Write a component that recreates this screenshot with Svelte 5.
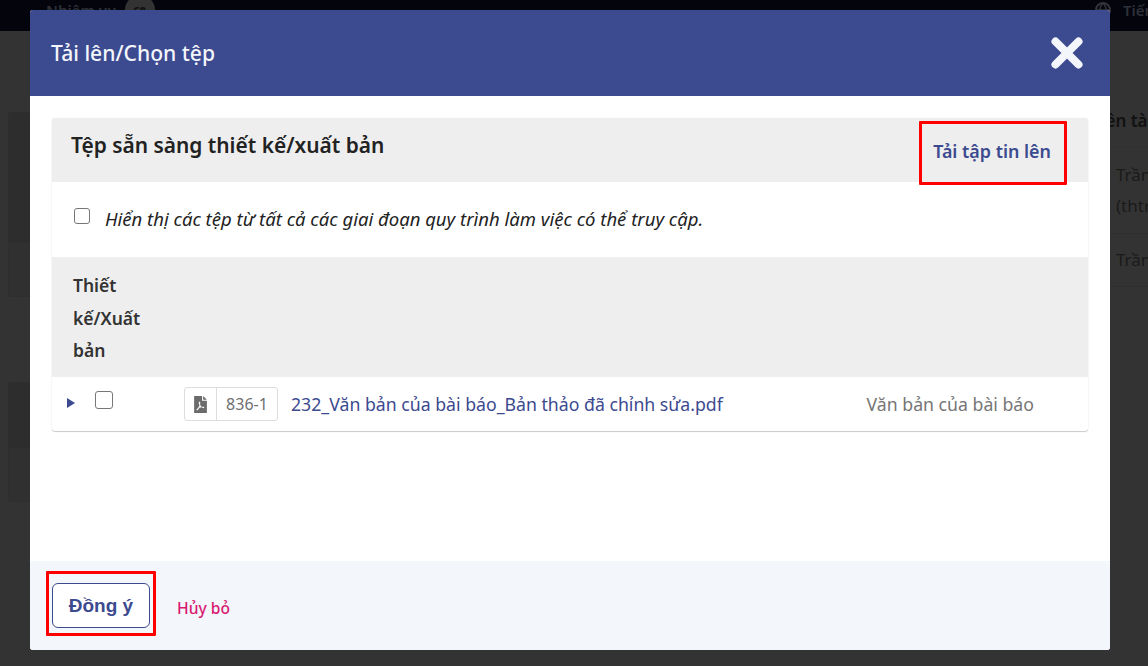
<script>
  const kindLabel = 'Văn bản của bài báo'
  const fileName = '232_Văn bản của bài báo_Bản thảo đã chỉnh sửa.pdf'
</script>

<div class="page">
  <header class="topbar">
    <span class="tasks">Nhiệm vụ <b class="count">68</b></span>
    <span class="lang">
      <svg viewBox="0 0 16 16" width="16" height="16">
        <circle cx="8" cy="8" r="7" fill="none" stroke="#33343a" stroke-width="2" />
        <path d="M1 8h14M8 1c-4 4-4 10 0 14M8 1c4 4 4 10 0 14" fill="none" stroke="#33343a" stroke-width="1.500" />
      </svg>
      <span class="lang-text">Tiến trình</span>
    </span>
  </header>
  <div class="behind">
    <div class="left">
      <div class="bg-card one"><div class="card-top top-one"></div></div>
      <div class="bg-card two"><div class="card-top top-two"></div></div>
    </div>
    <div class="right">
      <div class="right-head">Tên tài khoản</div>
      <div class="right-row first">Trần Hữu<br />(thtrung)</div>
      <div class="right-row second">Trần Hữu</div>
    </div>
  </div>
</div>

<div class="modal">
  <div class="modal-head">
    <h2>Tải lên/Chọn tệp</h2>
    <svg class="close" viewBox="0 0 32 32" width="32" height="32" aria-label="Đóng">
      <path d="M4.500 4.500 L27.500 27.500 M27.500 4.500 L4.500 27.500" stroke="#f3f6fb" stroke-width="8" stroke-linecap="round" />
    </svg>
  </div>

  <div class="modal-body">
    <div class="panel">
      <div class="panel-head">
        <span class="panel-title">Tệp sẵn sàng thiết kế/xuất bản</span>
        <a class="upload">Tải tập tin lên</a>
      </div>
      <label class="filter">
        <span class="check"></span>
        <em>Hiển thị các tệp từ tất cả các giai đoạn quy trình làm việc có thể truy cập.</em>
      </label>
      <div class="col-head">Thiết<br />kế/Xuất<br />bản</div>
      <div class="row">
        <span class="caret"></span>
        <span class="check row-check"></span>
        <span class="badge">
          <span class="badge-icon">
            <svg viewBox="0 0 12 16" width="13" height="17">
              <path fill="#6b6b6b" fill-rule="evenodd" d="M0 0h7.500v4.500H12V16H0z M8.500 0 12 3.500H8.500z M5 5.500c-.6 0-.8.6-.6 1.500.1.6.4 1.300.6 1.900-.5 1.200-1.200 2.300-2 3-.7.5-1 1-.7 1.400.4.4 1 .1 1.600-.7.3-.4.7-1 1-1.600.8-.3 1.700-.5 2.400-.5.7.7 1.400 1.100 1.900.9.5-.2.5-.8 0-1.100-.5-.3-1.300-.3-2.300-.2-.6-.7-1-1.400-1.300-2.200.2-.9.3-1.600.1-2C5.600 5.600 5.300 5.500 5 5.500z" />
            </svg>
          </span>
          <span class="badge-id">836-1</span>
        </span>
        <a class="file">{fileName}</a>
        <span class="kind">{kindLabel}</span>
      </div>
    </div>
    <div class="mark mark-upload"></div>
  </div>

  <div class="modal-foot">
    <button class="ok">Đồng ý</button>
    <a class="cancel">Hủy bỏ</a>
    <div class="mark mark-ok"></div>
  </div>
</div>

<style>
  :global(body) {
    margin: 0;
    font-family: "Noto Sans", "Open Sans", sans-serif;
    background: #333;
    overflow: hidden;
  }

  .page {
    height: 666px;
    background: #333;
    color: #1a1a1a;
  }

  .topbar {
    height: 31px;
    background: #03040c;
    display: flex;
    justify-content: space-between;
    padding: 0 0 0 46px;
    font-size: 15px;
    font-weight: 600;
    color: #2e3038;
    overflow: hidden;
  }

  .tasks {
    display: flex;
    gap: 8px;
    align-items: center;
    height: 20px;
  }

  .count {
    width: 30px;
    height: 30px;
    border-radius: 50%;
    background: #333;
    color: #111;
    font-size: 11px;
    display: flex;
    align-items: center;
    justify-content: center;
  }

  .lang {
    display: flex;
    gap: 12px;
    align-items: center;
    height: 20px;
    width: 53px;
    white-space: nowrap;
  }

  .lang svg,
  .lang-text {
    flex: none;
  }

  .behind {
    display: flex;
    justify-content: space-between;
  }

  .left {
    width: 30px;
    padding-left: 8px;
    box-sizing: border-box;
  }

  .bg-card {
    background: #303030;
    border: 1px solid #2e2e2e;
    border-right: 0;
    border-radius: 3px 0 0 4px;
    box-sizing: border-box;
  }

  .card-top {
    background: #2d2d2d;
  }

  .one {
    margin-top: 81px;
    height: 185px;
  }

  .top-one {
    height: 130px;
  }

  .two {
    margin-top: 85px;
    height: 120px;
  }

  .top-two {
    height: 65px;
  }

  .right {
    width: 38px;
    font-size: 17px;
    color: #1a1a1a;
    white-space: nowrap;
    overflow: hidden;
  }

  .right-head {
    margin: 77px 0 0 -13px;
    height: 38px;
    line-height: 26px;
    font-weight: 600;
    color: #111;
    border-bottom: 1px solid #303030;
  }

  .right-row {
    padding-left: 6px;
    line-height: 31px;
    border-bottom: 1px solid #2e2e2e;
    box-sizing: border-box;
  }

  .first {
    height: 87px;
    padding-top: 12px;
  }

  .second {
    height: 53px;
    padding-top: 10px;
  }

  .modal {
    position: absolute;
    left: 30px;
    top: 10px;
    width: 1080px;
    height: 640px;
    background: #fff;
    border-radius: 3px;
    display: flex;
    flex-direction: column;
    overflow: hidden;
  }

  .modal-head {
    height: 86px;
    flex: none;
    background: #3c4a8f;
    color: #f3f6fb;
    display: flex;
    align-items: center;
    justify-content: space-between;
    padding: 0 27px 0 21px;
  }

  h2 {
    margin: 0;
    font-size: 21.100px;
    font-weight: 500;
    line-height: 1;
  }

  .close {
    display: block;
    margin-top: -1px;
  }

  .modal-body {
    flex: 1;
    padding: 22px;
    position: relative;
  }

  .panel {
    border-radius: 3px;
    box-shadow: 0 1px 1px rgba(0, 0, 0, 0.2), 0 0 1px rgba(0, 0, 0, 0.12);
    background: #fff;
  }

  .panel-head {
    height: 64px;
    background: #eee;
    border-radius: 3px 3px 0 0;
    display: flex;
    justify-content: space-between;
    padding: 0 37px 0 19px;
  }

  .panel-title {
    font-size: 20.900px;
    font-weight: 600;
    color: #222;
    line-height: 54px;
  }

  .upload {
    font-size: 17.900px;
    font-weight: 600;
    color: #3c4a8f;
    line-height: 66px;
  }

  .filter {
    height: 75px;
    display: flex;
    align-items: center;
    padding-left: 22px;
    gap: 15px;
    font-size: 18.500px;
    color: #222;
  }

  .filter em {
    margin-top: -2px;
  }

  .check {
    width: 14px;
    height: 14px;
    border: 1px solid #767676;
    border-radius: 3px;
    background: #fff;
    display: block;
    flex: none;
    margin-top: -7px;
  }

  .col-head {
    height: 120px;
    box-sizing: border-box;
    background: #eee;
    padding: 12px 21px;
    font-size: 17.500px;
    font-weight: 600;
    line-height: 32.500px;
    color: #333;
  }

  .row {
    height: 54px;
    display: flex;
    align-items: center;
    position: relative;
    font-size: 17.700px;
  }

  .caret {
    width: 0;
    height: 0;
    border-left: 8px solid #3c4a8f;
    border-top: 5px solid transparent;
    border-bottom: 5px solid transparent;
    margin-left: 15px;
    margin-top: -2px;
  }

  .row-check {
    width: 16px;
    height: 16px;
    border-width: 1.500px;
    margin-left: 20px;
    margin-top: -8px;
  }

  .badge {
    display: flex;
    height: 34px;
    margin-left: 71px;
    border: 1px solid #ddd;
    border-radius: 3px;
    box-sizing: border-box;
    font-size: 16px;
    color: #707070;
    align-items: center;
  }

  .badge-icon {
    width: 31px;
    height: 32px;
    border-right: 1px solid #ddd;
    display: flex;
    align-items: center;
    justify-content: center;
  }

  .badge-id {
    width: 60px;
    text-align: center;
  }

  .file {
    color: #3c4a8f;
    margin-left: 13px;
  }

  .kind {
    color: #767676;
    position: absolute;
    right: 54px;
  }

  .modal-foot {
    height: 89px;
    flex: none;
    background: #f3f6fb;
    display: flex;
    align-items: center;
    padding-left: 22px;
    position: relative;
  }

  .ok {
    width: 98px;
    height: 45px;
    box-sizing: border-box;
    background: #fff;
    border: 1px solid #3c4a8f;
    border-radius: 6px;
    color: #3c4a8f;
    font: 700 19px "Liberation Sans", sans-serif;
    padding: 1px 0 0;
  }

  .cancel {
    color: #d81b72;
    font-size: 15.600px;
    font-weight: 500;
    margin-left: 27px;
    margin-top: 4px;
  }

  .mark {
    position: absolute;
    box-sizing: border-box;
    border: 3.500px solid #f00;
    border-radius: 1px;
    pointer-events: none;
  }

  .mark-upload {
    left: 889px;
    top: 25px;
    width: 148px;
    height: 64px;
  }

  .mark-ok {
    left: 16px;
    top: 10px;
    width: 110px;
    height: 65px;
  }
</style>
